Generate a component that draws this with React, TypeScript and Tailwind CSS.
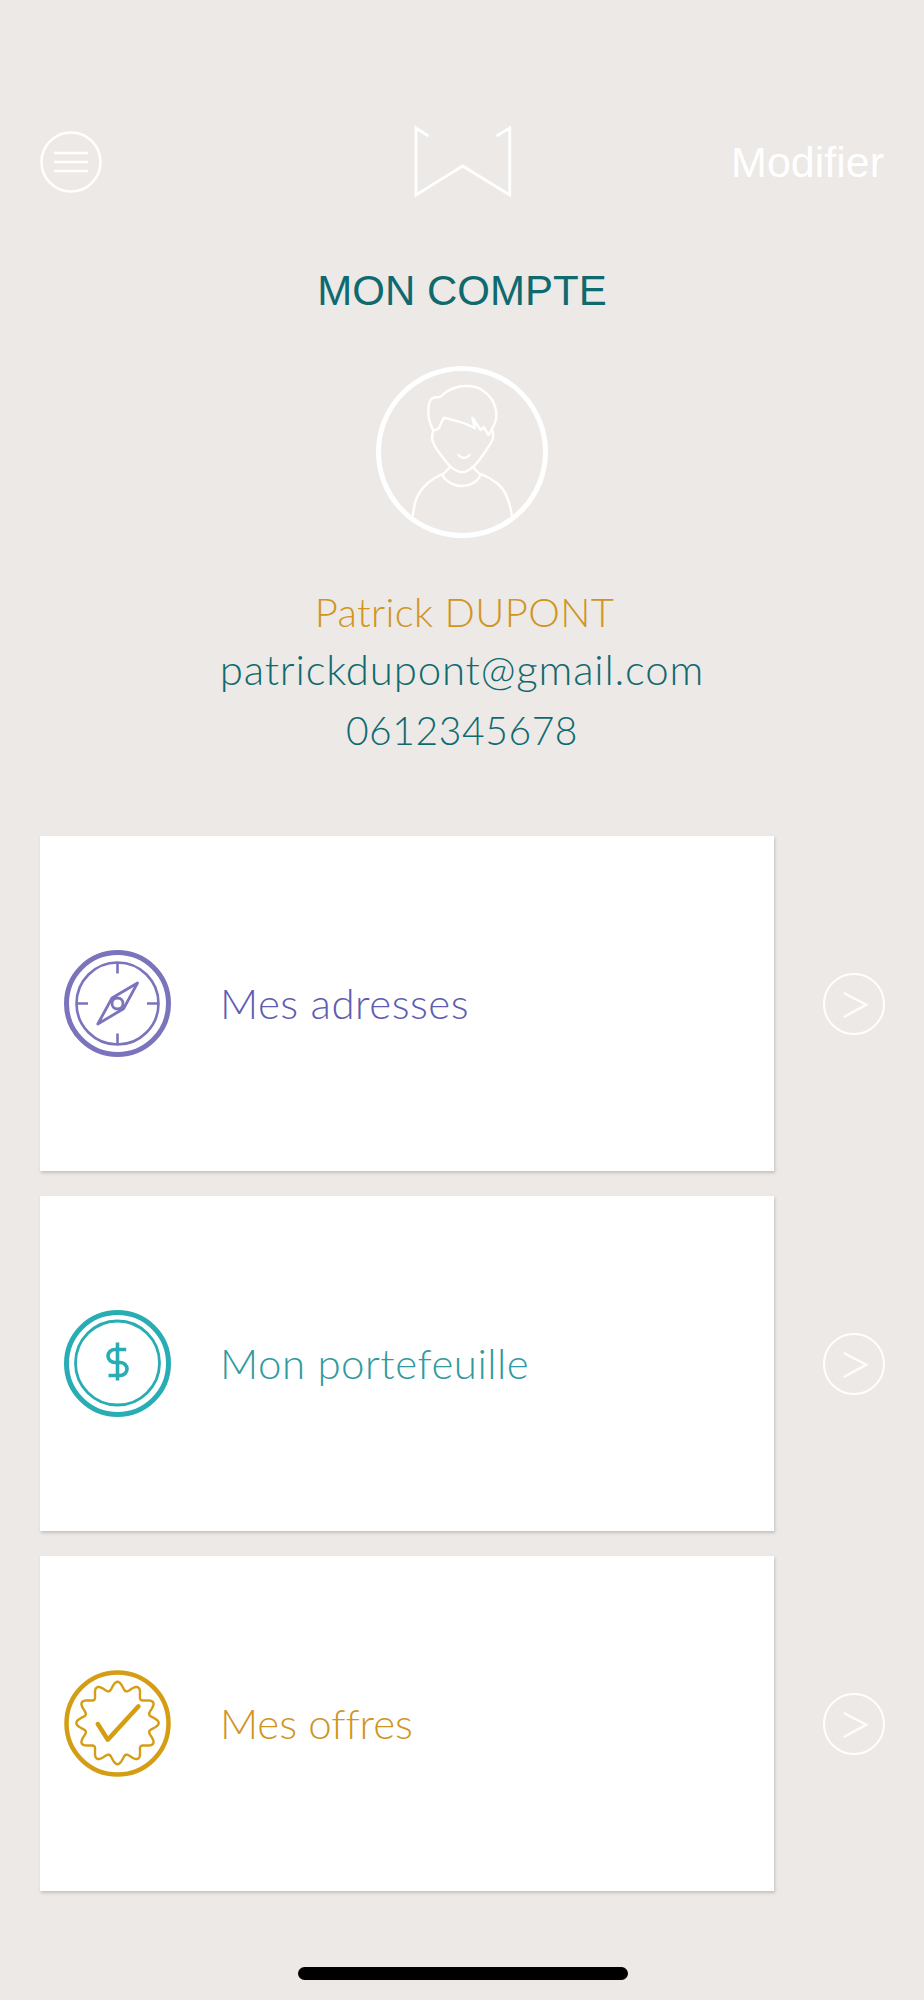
import React from 'react';

const wavePath = () => {
  const pts: string[] = [];
  for (let i = 0; i < 240; i++) {
    const t = (i / 240) * Math.PI * 2;
    const r = 37 + 4.2 * Math.cos(12 * t);
    pts.push(`${(53.5 + r * Math.sin(t)).toFixed(2)} ${(53 - r * Math.cos(t)).toFixed(2)}`);
  }
  return `M${pts.join('L')}Z`;
};

const CompassIcon = () => (
  <svg width="107" height="107" viewBox="0 0 107 107" fill="none" stroke="#7a74bc">
    <circle cx="53.5" cy="53.5" r="51" strokeWidth="5" />
    <circle cx="53.5" cy="53.5" r="41" strokeWidth="2.6" />
    <path d="M53.5 12.5V23.5M53.5 83.5V94.5M12.5 53.5H24M83 53.5H94.5" strokeWidth="2.6" />
    <path d="M73.5 33L59.5 58.8L33.8 74L48 48Z" strokeWidth="2.8" strokeLinejoin="round" />
    <circle cx="53.5" cy="53.5" r="5.5" strokeWidth="2.8" fill="#fff" />
  </svg>
);

const WalletIcon = () => (
  <svg width="107" height="107" viewBox="0 0 107 107" fill="none" stroke="#27adb3">
    <circle cx="53.5" cy="53.5" r="51" strokeWidth="5" />
    <circle cx="53.5" cy="53" r="42" strokeWidth="2.8" />
    <g transform="translate(53.5 52.5)" strokeWidth="3.6">
      <path d="M8.7 -13H-2.5a7 6.5 0 0 0 0 13H2.5a7 6.5 0 0 1 0 13H-9" />
      <path d="M0 -20V18" />
    </g>
  </svg>
);

const OfferIcon = () => (
  <svg width="107" height="107" viewBox="0 0 107 107" fill="none" stroke="#d49d14">
    <circle cx="53.5" cy="53.5" r="51" strokeWidth="4.5" />
    <path d={wavePath()} strokeWidth="2.4" strokeLinejoin="round" />
    <path d="M33.8 54L43.8 69.7L74.5 36.3" strokeWidth="4.5" strokeLinecap="round" strokeLinejoin="round" />
  </svg>
);

const ArrowButton = () => (
  <svg width="62" height="62" viewBox="0 0 62 62" fill="none" stroke="#fff" className="shrink-0">
    <circle cx="31" cy="31" r="30" strokeWidth="2" />
    <path d="M20.7 20L43.3 31.7L20.7 44" strokeWidth="2.5" strokeOpacity="0.9" />
  </svg>
);

const rows = [
  { label: 'Mes adresses', color: 'text-[#5e5cb0] tracking-[0.5px]', icon: <CompassIcon /> },
  { label: 'Mon portefeuille', color: 'text-[#2f9aa0] tracking-[0.5px]', icon: <WalletIcon /> },
  { label: 'Mes offres', color: 'text-[#d0951f] tracking-[-0.1px]', icon: <OfferIcon /> },
];

const App = () => {
  return (
    <div className="relative h-[2000px] w-[924px] overflow-hidden bg-[#ede9e6] pt-[125px]">
      <header className="grid grid-cols-3 items-center pl-[40px] pr-[40px]">
        <svg width="62" height="62" viewBox="0 0 62 62" fill="none" stroke="#fff">
          <circle cx="31" cy="31" r="29.5" strokeWidth="2.5" />
          <path d="M14 22H48M14 31H48M14 40H48" strokeWidth="2.5" />
        </svg>
        <svg width="100" height="73" viewBox="0 0 100 73" fill="none" stroke="#fff" className="ml-[3px] justify-self-center">
          <path d="M15.4 11L3 3V70L49.6 41L96.7 70V3L83.7 11" strokeWidth="2.8" />
        </svg>
        <span className="justify-self-end font-['Liberation_Sans',sans-serif] text-[43px] leading-[48px] text-white">
          Modifier
        </span>
      </header>

      <h1 className="mt-[69px] text-center font-['Liberation_Sans',sans-serif] text-[42px] leading-[48px] font-normal text-[#0f6a70]">
        MON COMPTE
      </h1>

      <div className="mt-[51px] flex justify-center">
        <svg width="172" height="172" viewBox="0 0 172 172" fill="none" stroke="#fff">
          <circle cx="86" cy="86" r="83.5" strokeWidth="5" />
          <g strokeWidth="2.4" strokeLinecap="round" strokeLinejoin="round">
            <path d="M57 64C53 56 52 50 52.3 44C52.5 37 54 32.3 58 31.5C61 31 63 31.5 64.7 30.7C69 26 76 22 84 20.5C92 19.5 100 20 106 24C114 29 119 37 120.3 45.7C120.8 52 119 58 117 60.7C115.5 64 114 67 112.3 69L108 61.3L104.7 64L96.3 51.7L99 62.3C93 59 88 57 83 55.7C77 54 72 53 68 51.7C66 55 64 59 63 62.3C61 63.5 59 64.5 57 64Z" />
            <path d="M57 65.7C56 68 56 71 56.3 74C57.5 78 59 81 61.3 84C65 89 69 95 73 99C77 103 81 106.3 86.3 106.3C91 106.3 95 103 99 99C103 95 107 89 110.3 84C113 80 116 76 117 72C117.3 69 117 66 116.3 64" />
            <path d="M82.3 89Q88 95 93.7 89" />
            <path d="M74.7 100.7L66.3 109M96.3 100.7L104.7 109" />
            <path d="M66.3 109C70 116 78 120 86 120C94 120 101 116 104.7 109" />
            <path d="M37 149C38 138 40 127 53 116C57 113 62 110 66.3 108M104.7 108C110 110 116 113 122 118C131 126 134 137 135.7 149" />
          </g>
        </svg>
      </div>

      <div className="mt-[44px] flex flex-col items-center font-['Lato',sans-serif] font-light">
        <p className="ml-[5px] text-[40px] leading-[60px] tracking-[0.35px] text-[#d0951f]">Patrick DUPONT</p>
        <p className="-mt-[3px] text-[42px] leading-[60px] tracking-[0.8px] text-[#0f6a70]">patrickdupont@gmail.com</p>
        <p className="mt-[1px] text-[39px] leading-[60px] tracking-[0.6px] text-[#0f6a70]">0612345678</p>
      </div>

      <div className="mt-[76px] flex flex-col gap-[25px] pl-[40px] pr-[39px]">
        {rows.map((row) => (
          <div key={row.label} className="flex items-center justify-between">
            <div className="flex h-[335px] w-[734px] items-center gap-[49px] bg-white pl-[24px] shadow-[1px_2px_3px_rgba(0,0,0,0.18)]">
              {row.icon}
              <span className={`font-['Lato',sans-serif] text-[42px] font-light ${row.color}`}>{row.label}</span>
            </div>
            <ArrowButton />
          </div>
        ))}
      </div>

      <div className="absolute bottom-[20px] left-[298px] h-[13px] w-[330px] rounded-[7px] bg-black" />
    </div>
  );
};

export default App;
